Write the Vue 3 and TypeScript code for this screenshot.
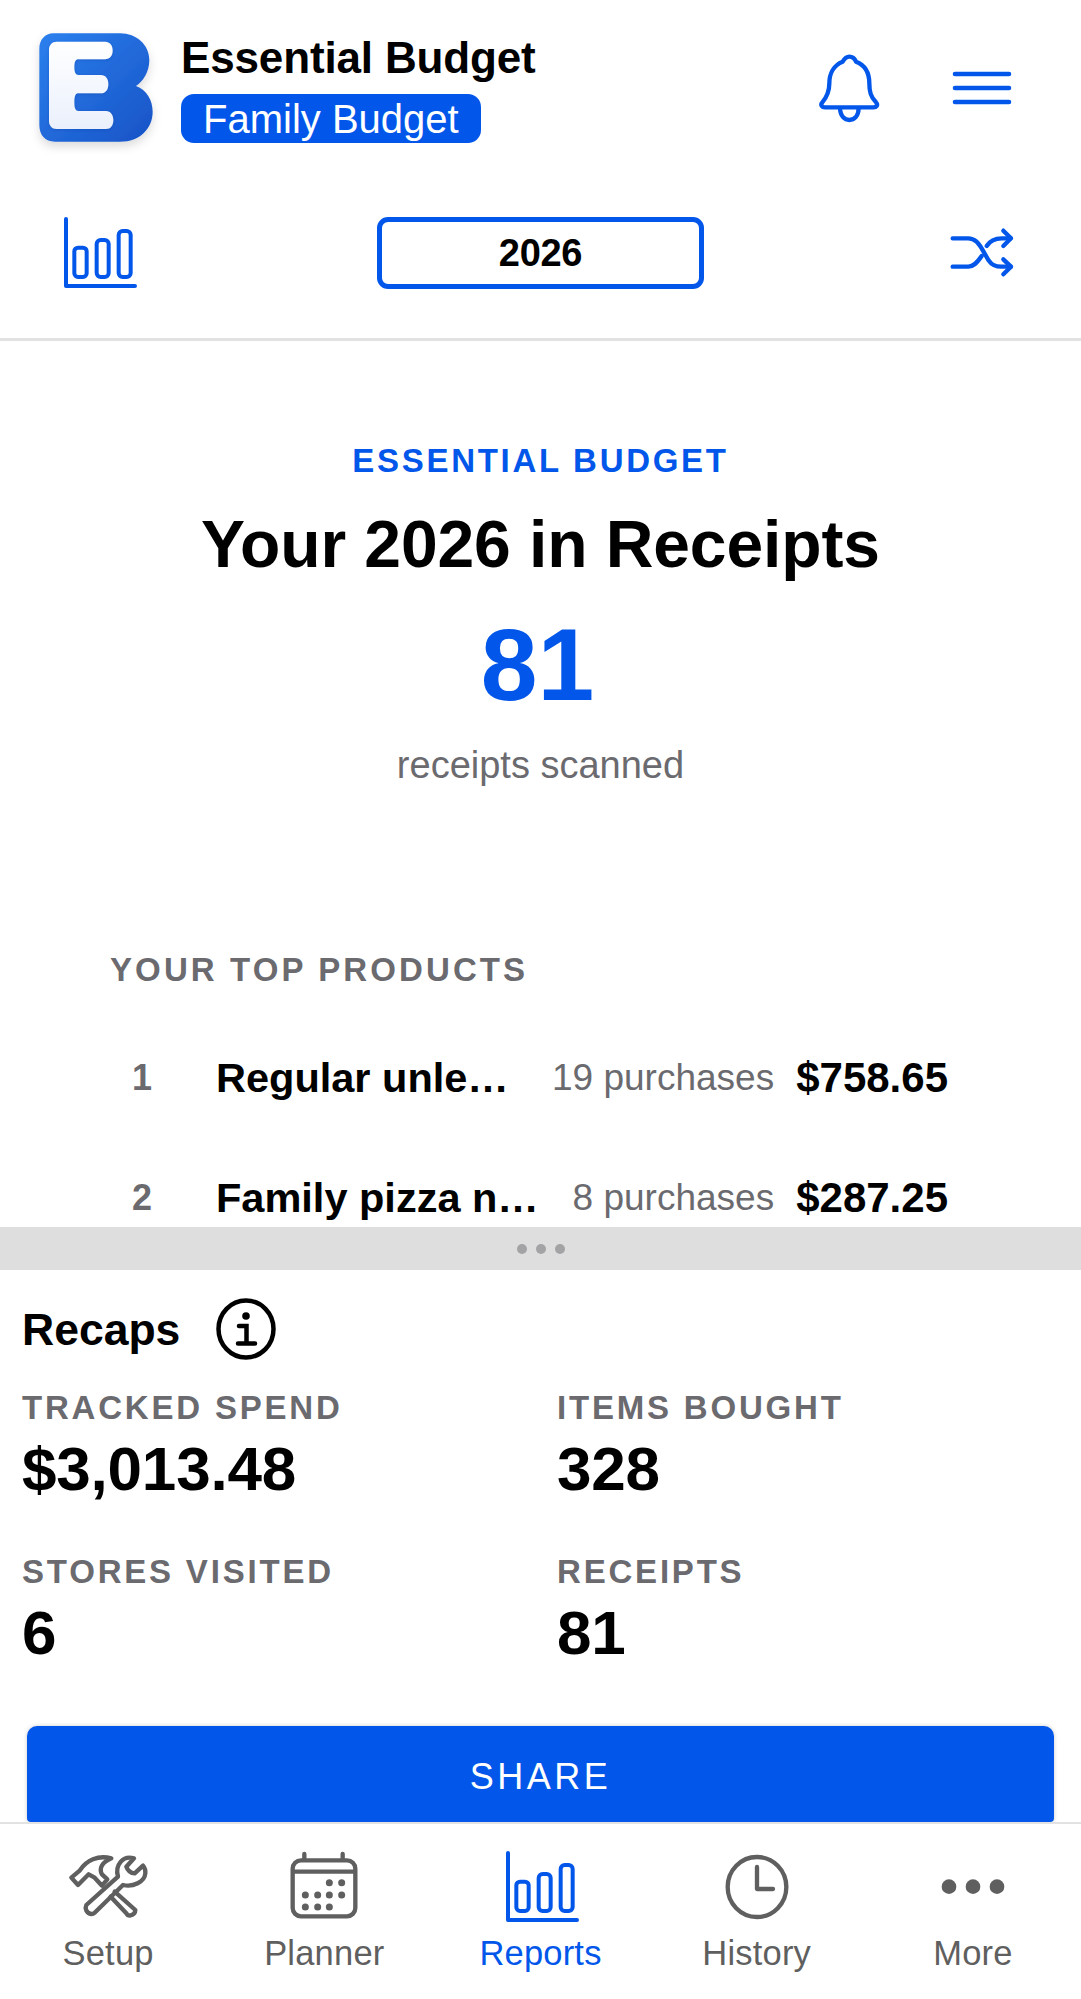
<script setup lang="ts">
interface Product { rank: number; name: string; count: string; price: string }
interface Stat { label: string; value: string }

const products: Product[] = [
  { rank: 1, name: 'Regular unleaded gasoline', count: '19 purchases', price: '$758.65' },
  { rank: 2, name: 'Family pizza night combo', count: '8 purchases', price: '$287.25' },
]
const stats: Stat[] = [
  { label: 'TRACKED SPEND', value: '$3,013.48' },
  { label: 'ITEMS BOUGHT', value: '328' },
  { label: 'STORES VISITED', value: '6' },
  { label: 'RECEIPTS', value: '81' },
]
const calendarDots: [number, number][] = [
  [150, 113], [187, 113],
  [78, 150], [115, 150], [150, 150], [187, 150],
  [78, 186], [115, 186], [150, 186],
]
</script>

<template>
  <div class="app">
    <header class="top">
      <svg class="logo" viewBox="0 0 420 390" width="140" height="130">
        <defs>
          <linearGradient id="logoBlue" x1="0" y1="0" x2="1" y2="1">
            <stop offset="0" stop-color="#2b80ee" />
            <stop offset="1" stop-color="#1753c6" />
          </linearGradient>
          <linearGradient id="logoWhite" x1="0" y1="0" x2="0" y2="1">
            <stop offset="0" stop-color="#ffffff" />
            <stop offset="1" stop-color="#eaf0fc" />
          </linearGradient>
          <filter id="logoShadow" x="-20%" y="-20%" width="140%" height="150%">
            <feDropShadow dx="0" dy="14" stdDeviation="14" flood-color="#000" flood-opacity="0.14" />
          </filter>
          <filter id="letterShadow" x="-20%" y="-20%" width="140%" height="140%">
            <feDropShadow dx="0" dy="3" stdDeviation="4" flood-color="#0a3a9c" flood-opacity="0.3" />
          </filter>
        </defs>
        <path
          d="M70 25H270C320 25 358 60 358 105C358 140 340 168 318 183C350 195 368 225 368 260C368 310 330 350 270 350H75C45 350 28 330 28 300V70C28 45 45 25 70 25Z"
          fill="url(#logoBlue)"
          filter="url(#logoShadow)"
        />
        <path
          d="M80 50H225C240 50 248 62 248 76C248 92 240 103 225 103H145C137 103 133 110 133 127C133 142 137 150 145 150H212C228 150 235 162 235 177C235 194 228 205 212 205H145C137 205 133 212 133 232C133 250 137 258 145 258H228C242 258 250 270 250 285C250 302 242 312 228 312H80C66 312 57 302 57 288V74C57 60 66 50 80 50Z"
          fill="url(#logoWhite)"
          filter="url(#letterShadow)"
        />
      </svg>
      <div class="brand">
        <div class="brand-name">Essential Budget</div>
        <div class="brand-badge">Family Budget</div>
      </div>
      <svg class="bell" viewBox="0 0 270 270" width="90" height="90" fill="none" stroke="#0257ea" stroke-width="13" stroke-linejoin="round">
        <path d="M118 35C130 35 135 43 138 50C165 60 178 85 178 115C178 140 182 155 198 172C205 180 200 187 190 187H45C36 187 30 180 37 172C52 155 58 140 58 115C58 85 72 60 98 50C102 43 107 35 118 35Z" />
        <path d="M90 187C90 215 105 225 118 225C132 225 146 215 146 187" />
      </svg>
      <svg class="menu" viewBox="0 0 60 34" width="60" height="34" stroke="#0257ea" stroke-width="4.600" stroke-linecap="round">
        <path d="M3 3H57M3 17H57M3 31H57" />
      </svg>
    </header>

    <div class="sub">
      <svg class="chart" viewBox="0 0 300 270" width="100" height="90" fill="none" stroke="#0257ea" stroke-width="12" stroke-linecap="round" stroke-linejoin="round">
        <path d="M48 27V228H255" />
        <rect x="73" y="113" width="37" height="88" rx="11" />
        <rect x="140" y="90" width="36" height="111" rx="12" />
        <rect x="206" y="63" width="36" height="138" rx="12" />
      </svg>
      <div class="year">2026</div>
      <svg class="shuffle" viewBox="0 0 270 210" width="90" height="70" fill="none" stroke="#0257ea" stroke-width="13" stroke-linecap="round" stroke-linejoin="round">
        <path d="M38 55H85C105 55 115 70 125 85L145 120C155 135 165 140 185 140H212" />
        <path d="M38 140H85C100 140 110 130 125 108" />
        <path d="M140 78C150 62 165 55 185 55H212" />
        <path d="M190 32L213 55L190 78" />
        <path d="M190 118L213 140L190 163" />
      </svg>
    </div>

    <main class="report">
      <div class="eyebrow">ESSENTIAL BUDGET</div>
      <h1 class="headline">Your 2026 in Receipts</h1>
      <div class="big-number">81</div>
      <div class="caption">receipts scanned</div>

      <section class="products">
        <h2 class="products-title">YOUR TOP PRODUCTS</h2>
        <div v-for="p in products" :key="p.rank" class="product">
          <span class="rank">{{ p.rank }}</span>
          <span class="name">{{ p.name }}</span>
          <span class="count">{{ p.count }}</span>
          <span class="price">{{ p.price }}</span>
        </div>
      </section>
    </main>

    <div class="handle">
      <i></i><i></i><i></i>
    </div>

    <section class="recaps">
      <div class="recaps-head">
        <span class="recaps-title">Recaps</span>
        <svg viewBox="0 0 60 62" width="60" height="62" fill="none" stroke="#000" stroke-width="4.500">
          <ellipse cx="30" cy="31" rx="27.500" ry="28.500" />
          <circle cx="30" cy="18" r="3.800" fill="#000" stroke="none" />
          <path d="M23 28H30.500V45M22 45.500H39" stroke-linecap="round" />
        </svg>
      </div>
      <div class="stats">
        <div v-for="s in stats" :key="s.label" class="stat">
          <div class="stat-label">{{ s.label }}</div>
          <div class="stat-value">{{ s.value }}</div>
        </div>
      </div>
      <button class="share">SHARE</button>
    </section>

    <nav class="tabs">
      <div class="tab">
        <svg viewBox="-10 0 300 270" width="100" height="90" fill="none" stroke="#5f5f5f" stroke-width="13" stroke-linejoin="round" stroke-linecap="round">
          <path d="M30 98L55 77C75 45 110 30 150 40C122 52 112 70 122 88L138 103L122 122L100 98L82 88L50 120Z" />
          <path d="M160 140L222 195C222 205 215 210 205 212C200 212 197 209 195 205L148 155" />
          <path d="M218 40C185 30 160 60 170 95L75 180C70 190 75 205 90 207C95 207 98 205 100 203L185 120C215 128 250 110 252 85C253 75 250 68 245 62L220 85C208 85 198 75 195 65Z" />
        </svg>
        <span class="tab-label">Setup</span>
      </div>
      <div class="tab">
        <svg viewBox="-16 0 300 270" width="100" height="90" fill="none" stroke="#5f5f5f" stroke-width="13">
          <rect x="40" y="46" width="188" height="168" rx="25" />
          <path d="M40 80H228" />
          <path d="M75 27V44M190 27V44" stroke-linecap="round" />
          <circle v-for="(d, i) in calendarDots" :key="i" :cx="d[0]" :cy="d[1]" r="10.500" fill="#5f5f5f" stroke="none" />
        </svg>
        <span class="tab-label">Planner</span>
      </div>
      <div class="tab active">
        <svg viewBox="-3 3 300 270" width="100" height="90" fill="none" stroke="#0257ea" stroke-width="12" stroke-linecap="round" stroke-linejoin="round">
          <path d="M48 27V228H255" />
          <rect x="73" y="113" width="37" height="88" rx="11" />
          <rect x="140" y="90" width="36" height="111" rx="12" />
          <rect x="206" y="63" width="36" height="138" rx="12" />
        </svg>
        <span class="tab-label">Reports</span>
      </div>
      <div class="tab">
        <svg viewBox="0 0 300 270" width="100" height="90" fill="none" stroke="#5f5f5f" stroke-width="13" stroke-linecap="round" stroke-linejoin="round">
          <ellipse cx="150" cy="126" rx="88" ry="90" />
          <path d="M150 66V132H198" />
        </svg>
        <span class="tab-label">History</span>
      </div>
      <div class="tab">
        <svg viewBox="0 0 300 270" width="100" height="90" fill="#5f5f5f">
          <circle cx="78" cy="125" r="22" />
          <circle cx="150" cy="125" r="22" />
          <circle cx="222" cy="125" r="22" />
        </svg>
        <span class="tab-label">More</span>
      </div>
    </nav>
  </div>
</template>

<style scoped>
.app {
  width: 1081px;
  height: 1999px;
  display: flex;
  flex-direction: column;
  overflow: hidden;
  background: #fff;
  color: #000;
  font-family: "Liberation Sans", Arial, sans-serif;
}
.top {
  flex: none;
  height: 176px;
  display: flex;
  align-items: flex-start;
  padding-top: 25px;
  padding-left: 30px;
  box-sizing: border-box;
}
.logo { flex: none; }
.brand {
  margin-left: 11px;
  padding-top: 8px;
}
.brand-name {
  font-size: 44px;
  font-weight: 700;
  line-height: 50px;
  letter-spacing: -0.15px;
}
.brand-badge {
  display: inline-block;
  margin-top: 11px;
  height: 49px;
  line-height: 51px;
  padding: 0 22px;
  border-radius: 13px;
  background: #0257ea;
  color: #fff;
  font-size: 40px;
}
.bell {
  margin-left: auto;
  margin-top: 20px;
}
.menu {
  margin-left: 52px;
  margin-right: 69px;
  margin-top: 46px;
}
.sub {
  flex: none;
  height: 165px;
  box-sizing: border-box;
  border-bottom: 3px solid #e2e2e2;
  display: grid;
  grid-template-columns: 1fr 327px 1fr;
  align-items: start;
  padding-top: 34px;
}
.chart { margin-left: 50px; }
.year {
  height: 72px;
  margin-top: 7px;
  box-sizing: border-box;
  border: 5px solid #0257ea;
  border-radius: 11px;
  font-size: 38px;
  font-weight: 700;
  letter-spacing: -0.3px;
  line-height: 62px;
  text-align: center;
}
.shuffle {
  justify-self: end;
  margin-right: 51px;
  margin-top: 10px;
}
.report {
  flex: 1;
  min-height: 0;
  overflow: hidden;
  text-align: center;
  padding-top: 101px;
}
.eyebrow {
  font-size: 33px;
  font-weight: 700;
  letter-spacing: 2.700px;
  line-height: 38px;
  color: #0257ea;
}
.headline {
  margin: 26px 0 0;
  font-size: 66px;
  font-weight: 700;
  line-height: 76px;
  letter-spacing: -0.1px;
}
.big-number {
  margin-top: 23px;
  padding-right: 6px;
  font-size: 102px;
  font-weight: 700;
  line-height: 120px;
  color: #0257ea;
}
.caption {
  margin-top: 18px;
  font-size: 38px;
  line-height: 44px;
  color: #6a6a6f;
}
.products {
  text-align: left;
  margin-top: 164px;
  padding: 0 133px 0 110px;
}
.products-title {
  margin: 0;
  font-size: 33px;
  font-weight: 700;
  letter-spacing: 3.100px;
  line-height: 38px;
  color: #6a6a6f;
}
.product {
  display: flex;
  align-items: center;
  height: 50px;
  margin-top: 70px;
}
.products-title + .product { margin-top: 64px; }
.rank {
  flex: none;
  width: 64px;
  text-align: center;
  font-size: 36px;
  font-weight: 700;
  color: #6a6a6f;
}
.name {
  flex: 1;
  min-width: 0;
  margin-left: 42px;
  font-size: 41.500px;
  font-weight: 700;
  white-space: nowrap;
  overflow: hidden;
  text-overflow: ellipsis;
}
.count {
  flex: none;
  margin-left: 28px;
  font-size: 37px;
  color: #6a6a6f;
}
.price {
  flex: none;
  margin-left: 22px;
  font-size: 42px;
  font-weight: 700;
}
.handle {
  flex: none;
  height: 43px;
  background: #dedede;
  display: flex;
  justify-content: center;
  align-items: center;
  gap: 9px;
}
.handle i {
  width: 10px;
  height: 10px;
  border-radius: 50%;
  background: #a3a3a6;
}
.recaps {
  flex: none;
  height: 552px;
  box-sizing: border-box;
  padding: 28px 27px 0 22px;
  display: flex;
  flex-direction: column;
}
.recaps-head {
  display: flex;
  align-items: center;
  gap: 36px;
  height: 62px;
}
.recaps-title {
  font-size: 44.500px;
  font-weight: 700;
  padding-top: 2px;
}
.stats {
  display: grid;
  grid-template-columns: 535px 1fr;
  row-gap: 51px;
  margin-top: 29px;
}
.stat-label {
  font-size: 33px;
  font-weight: 700;
  letter-spacing: 2.800px;
  line-height: 38px;
  color: #6a6a6f;
}
.stat-value {
  font-size: 62px;
  font-weight: 700;
  line-height: 66px;
  margin-top: 9px;
  letter-spacing: -0.2px;
}
.share {
  margin-top: auto;
  margin-left: 5px;
  height: 96px;
  padding: 5px 0 0;
  border: none;
  border-radius: 10px 10px 4px 4px;
  background: #0257ea;
  color: #fff;
  font: 36px "Liberation Sans", Arial, sans-serif;
  letter-spacing: 3.500px;
  box-shadow: 0 0 4px rgba(0, 0, 0, 0.2);
}
.tabs {
  flex: none;
  height: 177px;
  box-sizing: border-box;
  position: relative;
  background: #fff;
  border-top: 2px solid #e2e2e2;
  display: flex;
}
.tab {
  flex: 1;
  display: flex;
  flex-direction: column;
  align-items: center;
  color: #5f5f5f;
}
.tab svg { margin-top: 21px; }
.tab-label {
  margin-top: -1px;
  font-size: 34.500px;
  line-height: 38px;
  letter-spacing: 0.2px;
}
.tab.active { color: #0257ea; }
</style>
